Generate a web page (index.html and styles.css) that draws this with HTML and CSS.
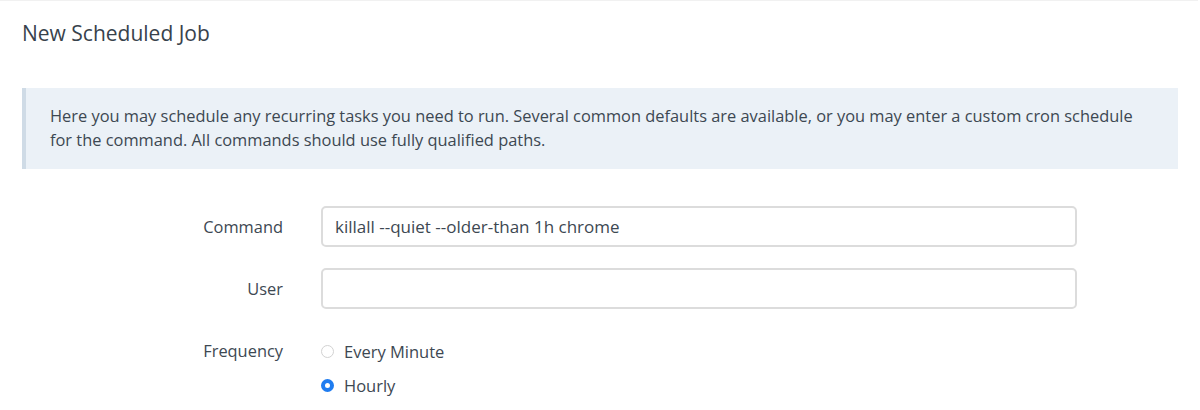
FILE: index.html
```html
<!DOCTYPE html>
<html>
<head>
<meta charset="utf-8">
<link rel="stylesheet" href="styles.css">
</head>
<body>
<div class="card">
  <h1 class="title">New Scheduled Job</h1>
  <div class="notice">Here you may schedule any recurring tasks you need to run. Several common defaults are available, or you may enter a custom cron schedule for the command. All commands should use fully qualified paths.</div>
  <div class="form">
    <div class="row">
      <label class="label">Command</label>
      <div class="field"><input class="input" type="text" value="killall --quiet --older-than 1h chrome"></div>
    </div>
    <div class="row">
      <label class="label">User</label>
      <div class="field"><input class="input" type="text" value=""></div>
    </div>
    <div class="row row-radio">
      <label class="label">Frequency</label>
      <div class="field radios">
        <div class="radio"><span class="dot"></span><span>Every Minute</span></div>
        <div class="radio"><span class="dot checked"></span><span>Hourly</span></div>
      </div>
    </div>
  </div>
</div>
</body>
</html>
```
FILE: styles.css
```css
html, body { margin: 0; padding: 0; background: #fff; }
body { font-family: "Open Sans", "Noto Sans", sans-serif; color: #3d4852; font-size: 16px; }
.card { border-top: 1px solid #f1f1f1; width: 1198px; padding: 0 22px; box-sizing: border-box; }
.title { margin: 0; font-size: 21px; font-weight: 500; padding-top: 20px; height: 66px; box-sizing: border-box; line-height: 24px; color: #38424c; }
.notice { margin-top: 21px; width: 1156px; box-sizing: border-box; background: #ebf1f7; border-left: 4px solid #cfdbe6; padding: 16px 24px 16px 24px; line-height: 24px; min-height: 81px; font-size: 16.4px; }
.form { margin-top: 37px; }
.row { display: flex; align-items: center; margin-bottom: 21px; }
.label { width: 299px; text-align: right; padding-right: 38px; box-sizing: border-box; font-weight: 500; font-size: 16.4px; }
.field { width: 756px; }
.input { width: 100%; height: 41px; box-sizing: border-box; border: 2px solid #dcdcdc; border-radius: 5px; padding: 0 12px; font-family: inherit; font-size: 17px; color: #3d4852; outline: none; }
.row-radio { align-items: flex-start; margin-top: 30px; }
.row-radio .label { padding-top: 0; }
.radios { display: flex; flex-direction: column; gap: 10px; }
.radio { display: flex; align-items: center; gap: 10px; height: 24px; font-size: 16.5px; }
.dot { width: 13px; height: 13px; border-radius: 50%; border: 1px solid #d2d2d2; box-sizing: border-box; background: #fff; flex: none; }
.dot.checked { border: 4px solid #1f7cf0; background: #fff; }
```
